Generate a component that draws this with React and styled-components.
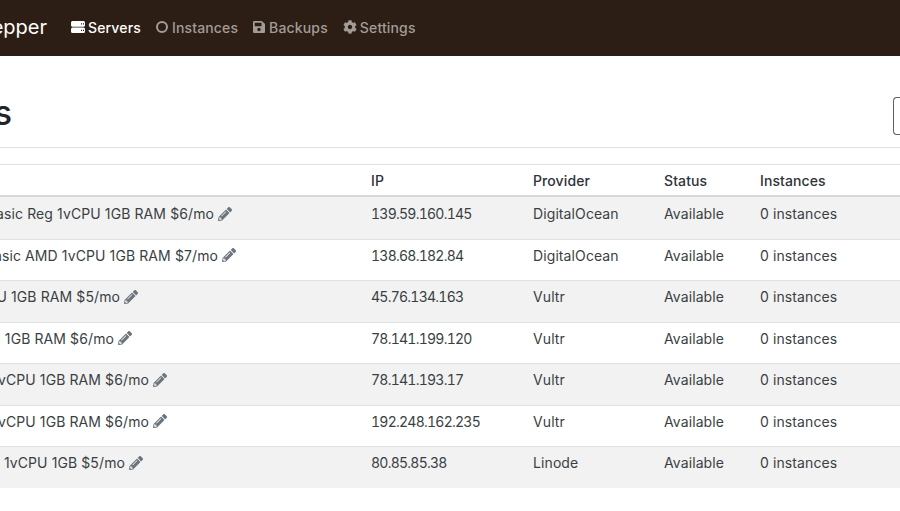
import React from 'react'
import styled, {createGlobalStyle} from 'styled-components'
import {FaSave, FaCog, FaPencilAlt} from 'react-icons/fa'

const GlobalStyle = createGlobalStyle`
  html, body {
    margin: 0;
    height: 100%;
    overflow: hidden;
    background: #fff;
    font-family: Inter, "Noto Sans", sans-serif;
    color: #3a3f44;
  }
`

const NavBar = styled.nav`
  display: flex;
  align-items: center;
  box-sizing: border-box;
  height: 56px;
  padding-bottom: 2px;
  background: #2c1e15;
`

const Brand = styled.div`
  display: flex;
  justify-content: flex-end;
  width: 47px;
  margin-right: 24px;
  font-size: 20px;
  color: #fff;
  white-space: nowrap;
`

const NavLink = styled.a`
  display: flex;
  align-items: center;
  gap: ${p => p.$gap || 3}px;
  margin-right: 15px;
  font-size: 14px;
  font-weight: 500;
  letter-spacing: 0.15px;
  color: ${p => (p.$active ? '#fff' : '#a29c97')};

  svg {
    flex-shrink: 0;
    width: ${p => p.$icon || 14}px;
    height: 14px;
  }
`

const Header = styled.header`
  display: flex;
  align-items: center;
  justify-content: space-between;
  box-sizing: border-box;
  height: 92px;
  padding-top: 25px;
  margin-bottom: 16px;
  border-bottom: 1px solid #dfe1e3;
`

const Title = styled.h1`
  display: flex;
  justify-content: flex-end;
  width: 12px;
  margin: 0 0 4px;
  font-size: 34px;
  font-weight: 500;
  color: #212529;
  white-space: nowrap;
`

const AddButton = styled.button`
  width: 7px;
  height: 38px;
  margin-top: 4px;
  padding: 0;
  border: 1px solid #5c5f63;
  border-right: 0;
  border-radius: 4px 0 0 4px;
  background: #fff;
`

const Row = styled.div`
  display: grid;
  grid-template-columns: 371px 162px 131px 96px 1fr;
  align-items: start;
  box-sizing: border-box;
  height: 41.57px;
  padding-top: 5px;
  font-size: 14px;
  line-height: 21px;
  letter-spacing: 0.1px;
  border-top: 1px solid ${p => (p.$first ? 'transparent' : '#dfe1e3')};
  background: ${p => (p.$odd ? '#f2f2f2' : '#fff')};
`

const HeadRow = styled(Row)`
  height: 33px;
  font-weight: 500;
  color: #2f3439;
  border-top: 1px solid #dfe1e3;
  border-bottom: 2px solid #d6d8da;
`

const IpCell = styled.div`
  font-variant-numeric: tabular-nums;
  letter-spacing: -0.75px;
`

const NameCell = styled.div`
  display: flex;
  align-items: center;
  justify-content: flex-end;
  gap: 4px;
  width: ${p => p.$end}px;
  white-space: nowrap;

  svg {
    flex-shrink: 0;
    width: 14px;
    height: 14px;
    color: #6c757d;
  }
`

const ServerIcon = () =>
  <svg viewBox="0 0 14 14" fill="currentColor">
    <path fillRule="evenodd" d="M1.5 1H12.5A1.5 1.5 0 0 1 14 2.5V5.2A1.5 1.5 0 0 1 12.5 6.7H1.5A1.5 1.5 0 0 1 0 5.2V2.5A1.5 1.5 0 0 1 1.5 1ZM10 3.2V4.4H11V3.2ZM12 3.2V4.4H13V3.2Z" />
    <path fillRule="evenodd" d="M1.5 7.6H12.5A1.5 1.5 0 0 1 14 9.1V11.6A1.5 1.5 0 0 1 12.5 13.1H1.5A1.5 1.5 0 0 1 0 11.6V9.1A1.5 1.5 0 0 1 1.5 7.6ZM10 9.8V11H11V9.8ZM12 9.8V11H13V9.8Z" />
  </svg>

const RingIcon = () =>
  <svg viewBox="0 0 12 14" fill="none" stroke="currentColor" strokeWidth="2">
    <circle cx="6" cy="7" r="5" />
  </svg>

const servers = [
  {name: 'Basic Reg 1vCPU 1GB RAM $6/mo', end: 232, ip: '139.59.160.145', provider: 'DigitalOcean'},
  {name: 'Basic AMD 1vCPU 1GB RAM $7/mo', end: 236, ip: '138.68.182.84', provider: 'DigitalOcean'},
  {name: '1vCPU 1GB RAM $5/mo', end: 138, ip: '45.76.134.163', provider: 'Vultr'},
  {name: '1vCPU 1GB RAM $6/mo', end: 132, ip: '78.141.199.120', provider: 'Vultr'},
  {name: '1vCPU 1GB RAM $6/mo', end: 167, ip: '78.141.193.17', provider: 'Vultr'},
  {name: '1vCPU 1GB RAM $6/mo', end: 167, ip: '192.248.162.235', provider: 'Vultr'},
  {name: 'Nanode 1vCPU 1GB $5/mo', end: 143, ip: '80.85.85.38', provider: 'Linode'},
]

export default function App() {
  return (
    <>
      <GlobalStyle />
      <NavBar>
        <Brand>Pepper</Brand>
        <NavLink $active><ServerIcon />Servers</NavLink>
        <NavLink $icon={12} $gap={4}><RingIcon />Instances</NavLink>
        <NavLink $icon={12} $gap={4}><FaSave />Backups</NavLink>
        <NavLink><FaCog />Settings</NavLink>
      </NavBar>
      <Header>
        <Title>Servers</Title>
        <AddButton aria-label="Add server" />
      </Header>
      <HeadRow>
        <div />
        <div>IP</div>
        <div>Provider</div>
        <div>Status</div>
        <div>Instances</div>
      </HeadRow>
      {servers.map((server, index) => (
        <Row key={server.ip} $first={index === 0} $odd={index % 2 === 0}>
          <NameCell $end={server.end}>{server.name}<FaPencilAlt /></NameCell>
          <IpCell>{server.ip}</IpCell>
          <div>{server.provider}</div>
          <div>Available</div>
          <div>0 instances</div>
        </Row>
      ))}
    </>
  )
}
